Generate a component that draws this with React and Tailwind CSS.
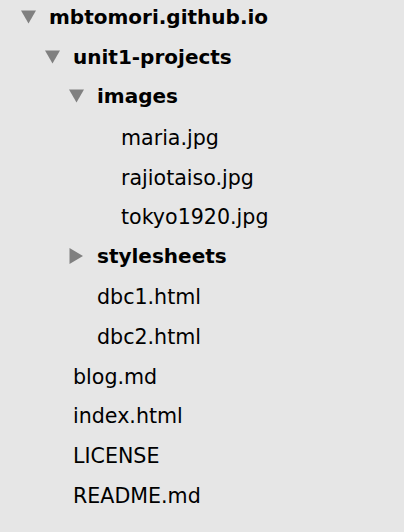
const tree = [
  { name: 'mbtomori.github.io', level: 0, dir: 'open' },
  { name: 'unit1-projects', level: 1, dir: 'open' },
  { name: 'images', level: 2, dir: 'open' },
  { name: 'maria.jpg', level: 3 },
  { name: 'rajiotaiso.jpg', level: 3 },
  { name: 'tokyo1920.jpg', level: 3 },
  { name: 'stylesheets', level: 2, dir: 'closed' },
  { name: 'dbc1.html', level: 2 },
  { name: 'dbc2.html', level: 2 },
  { name: 'blog.md', level: 1 },
  { name: 'index.html', level: 1 },
  { name: 'LICENSE', level: 1 },
  { name: 'README.md', level: 1 },
];

const PAD = ['pl-[21px]', 'pl-[45px]', 'pl-[69px]', 'pl-[93px]'];

function Arrow({ dir }) {
  if (dir === 'open') {
    return (
      <svg width="15" height="14" viewBox="0 0 15 14" className="shrink-0">
        <path d="M0 0.5 L15 0.5 L7.5 13.5 Z" fill="#808080" />
      </svg>
    );
  }
  if (dir === 'closed') {
    return (
      <svg width="15" height="16" viewBox="0 0 15 16" className="shrink-0">
        <path d="M0.5 0 L14 8 L0.5 16 Z" fill="#808080" />
      </svg>
    );
  }
  return <span className="w-[15px] shrink-0" />;
}

export default function App() {
  return (
    <div className="w-[404px] h-[532px] bg-[#e6e6e6] overflow-hidden text-black" style={{ fontFamily: '"DejaVu Sans", "Liberation Sans", sans-serif' }}>
      {tree.map(item => (
        <div key={item.name} className={`flex items-center h-[39.8px] gap-[13px] ${PAD[item.level]} first:-mt-[3px]`}>
          <Arrow dir={item.dir} />
          <span className={item.dir ? 'font-bold text-[20px]' : 'text-[20.6px] pt-[4px]'}>{item.name}</span>
        </div>
      ))}
    </div>
  );
}
